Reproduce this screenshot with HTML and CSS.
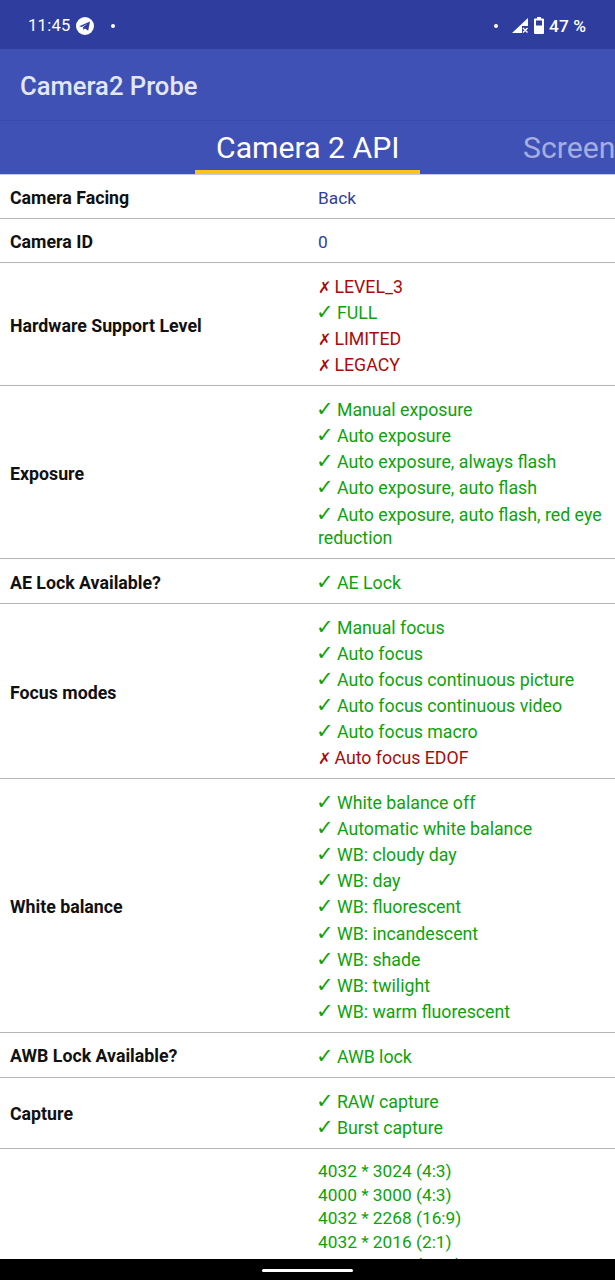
FILE: index.html
```html
<!DOCTYPE html>
<html lang="en">
<head>
    <meta charset="UTF-8">
    <meta name="viewport" content="width=device-width, initial-scale=1.0">
    <title>Camera2 Probe</title>
    <link rel="stylesheet" href="styles.css">
</head>
<body>
    <!-- Status bar -->
    <div class="status-bar">
        <div class="status-left">
            <span class="clock">11:45</span>
            <svg class="tg-icon" width="18" height="18" viewBox="0 0 18 18">
                <circle cx="9" cy="9" r="9" fill="#fff"/>
                <path d="M3.2 9.2 L14 4.6 L12.2 13.8 L8.9 11.4 L7.4 13 L7 10.2 L11.6 6.6 L5.9 10 Z" fill="#2f3e9e"/>
            </svg>
            <span class="dot dot-left"></span>
        </div>
        <div class="status-right">
            <span class="dot dot-right"></span>
            <svg class="signal-icon" width="16" height="15" viewBox="0 0 16 15">
                <path d="M0 15 L16 0 V8 H10 V15 Z" fill="#fff"/>
                <path d="M11 10 L15.5 14.5 M15.5 10 L11 14.5" stroke="#fff" stroke-width="1.4"/>
            </svg>
            <svg class="battery-icon" width="10" height="17" viewBox="0 0 10 17">
                <path d="M3 0 H7 V1.5 H9 A1 1 0 0 1 10 2.5 V16 A1 1 0 0 1 9 17 H1 A1 1 0 0 1 0 16 V2.5 A1 1 0 0 1 1 1.5 H3 Z" fill="#fff"/>
                <rect x="2" y="3.5" width="6" height="5" fill="#2f3e9e"/>
            </svg>
            <span class="battery-text">47 %</span>
        </div>
    </div>

    <!-- App bar -->
    <header class="app-bar">Camera2 Probe</header>

    <!-- Tabs -->
    <nav class="tabs">
        <div class="tab tab-active">Camera 2 API</div>
        <div class="tab">Screen</div>
    </nav>

    <!-- Feature table -->
    <main class="table-wrap">
        <div class="row">
            <div class="label">Camera Facing</div>
            <div class="value info"><div class="line">Back</div></div>
        </div>
        <div class="row">
            <div class="label">Camera ID</div>
            <div class="value info"><div class="line">0</div></div>
        </div>
        <div class="row">
            <div class="label">Hardware Support Level</div>
            <div class="value">
                <div class="item no"><span class="mark">✗</span> LEVEL_3</div>
                <div class="item yes"><span class="mark">✓</span> FULL</div>
                <div class="item no"><span class="mark">✗</span> LIMITED</div>
                <div class="item no"><span class="mark">✗</span> LEGACY</div>
            </div>
        </div>
        <div class="row">
            <div class="label">Exposure</div>
            <div class="value">
                <div class="item yes"><span class="mark">✓</span> Manual exposure</div>
                <div class="item yes"><span class="mark">✓</span> Auto exposure</div>
                <div class="item yes"><span class="mark">✓</span> Auto exposure, always flash</div>
                <div class="item yes"><span class="mark">✓</span> Auto exposure, auto flash</div>
                <div class="item yes"><span class="mark">✓</span> Auto exposure, auto flash, red eye reduction</div>
            </div>
        </div>
        <div class="row">
            <div class="label">AE Lock Available?</div>
            <div class="value">
                <div class="item yes"><span class="mark">✓</span> AE Lock</div>
            </div>
        </div>
        <div class="row">
            <div class="label">Focus modes</div>
            <div class="value">
                <div class="item yes"><span class="mark">✓</span> Manual focus</div>
                <div class="item yes"><span class="mark">✓</span> Auto focus</div>
                <div class="item yes"><span class="mark">✓</span> Auto focus continuous picture</div>
                <div class="item yes"><span class="mark">✓</span> Auto focus continuous video</div>
                <div class="item yes"><span class="mark">✓</span> Auto focus macro</div>
                <div class="item no"><span class="mark">✗</span> Auto focus EDOF</div>
            </div>
        </div>
        <div class="row">
            <div class="label">White balance</div>
            <div class="value">
                <div class="item yes"><span class="mark">✓</span> White balance off</div>
                <div class="item yes"><span class="mark">✓</span> Automatic white balance</div>
                <div class="item yes"><span class="mark">✓</span> WB: cloudy day</div>
                <div class="item yes"><span class="mark">✓</span> WB: day</div>
                <div class="item yes"><span class="mark">✓</span> WB: fluorescent</div>
                <div class="item yes"><span class="mark">✓</span> WB: incandescent</div>
                <div class="item yes"><span class="mark">✓</span> WB: shade</div>
                <div class="item yes"><span class="mark">✓</span> WB: twilight</div>
                <div class="item yes"><span class="mark">✓</span> WB: warm fluorescent</div>
            </div>
        </div>
        <div class="row">
            <div class="label">AWB Lock Available?</div>
            <div class="value">
                <div class="item yes"><span class="mark">✓</span> AWB lock</div>
            </div>
        </div>
        <div class="row">
            <div class="label">Capture</div>
            <div class="value">
                <div class="item yes"><span class="mark">✓</span> RAW capture</div>
                <div class="item yes"><span class="mark">✓</span> Burst capture</div>
            </div>
        </div>
        <div class="row">
            <div class="label"></div>
            <div class="value plain yes">
                <div class="line">4032 * 3024 (4:3)</div>
                <div class="line">4000 * 3000 (4:3)</div>
                <div class="line">4032 * 2268 (16:9)</div>
                <div class="line">4032 * 2016 (2:1)</div>
                <div class="line">3840 * 2160 (16:9)</div>
            </div>
        </div>
    </main>

    <!-- Navigation bar -->
    <footer class="nav-bar"><span class="nav-handle"></span></footer>
</body>
</html>
```

FILE: styles.css
```css
body {
    font-family: Roboto, sans-serif;
    margin: 0;
    padding: 0;
    display: flex;
    flex-direction: column;
    height: 1280px;
    overflow: hidden;
    background: #fff;
}
.status-bar {
    height: 49px;
    flex: none;
    background: #2f3e9e;
    color: #fff;
    display: flex;
    justify-content: space-between;
    align-items: center;
    padding: 2px 29px 0 28px;
    box-sizing: border-box;
}
.status-left, .status-right {
    display: flex;
    align-items: center;
}
.clock {
    font-size: 16.5px;
    letter-spacing: 0.3px;
}
.tg-icon {
    margin-left: 5px;
}
.dot {
    width: 4px;
    height: 4px;
    background: #fff;
    border-radius: 50%;
}
.dot-left {
    margin-left: 17px;
}
.dot-right {
    margin-right: 14px;
}
.battery-icon {
    margin-left: 6px;
}
.battery-text {
    font-size: 17.4px;
    font-weight: 500;
    margin-left: 5px;
}
.app-bar {
    height: 71px;
    flex: none;
    background: #3f51b5;
    color: #e3e6f7;
    font-size: 25.6px;
    font-weight: 500;
    line-height: 75px;
    padding-left: 20px;
    box-sizing: border-box;
}
.tabs {
    height: 55px;
    flex: none;
    background: #3f51b5;
    border-top: 1px solid #3a4aac;
    border-bottom: 1px solid #c5cae9;
    box-sizing: border-box;
    display: flex;
    padding-left: 195px;
    overflow: hidden;
    white-space: nowrap;
}
.tab {
    flex: none;
    font-size: 30.2px;
    color: #a5aee0;
    padding-top: 9px;
    height: 53px;
    box-sizing: border-box;
}
.tab-active {
    color: #fff;
    width: 225px;
    border-bottom: 4px solid #fcc419;
    margin-right: 103px;
    padding-left: 21px;
}
.table-wrap {
    flex: 1;
    min-height: 0;
    overflow: hidden;
}
.row {
    display: flex;
    align-items: center;
    min-height: 44px;
    padding-left: 10px;
    border-bottom: 1px solid #b4b4b4;
    box-sizing: border-box;
}
.label {
    width: 308px;
    flex: none;
    padding-top: 3px;
    font-size: 17.75px;
    font-weight: 700;
    color: #111;
}
.value {
    flex: 1;
    padding: 10.2px 8px 7.6px 0;
    font-size: 17.75px;
    line-height: 23.5px;
}
.info, .plain {
    font-size: 17.3px;
}
.info {
    color: #303f9f;
    padding-top: 12px;
}
.plain {
    padding-top: 11.5px;
}
.item {
    padding-top: 2.6px;
}
.yes {
    color: #0ca30c;
}
.no {
    color: #a80b0b;
}
.mark {
    font-family: "DejaVu Sans", sans-serif;
    font-size: 21px;
    line-height: 0;
    font-weight: 700;
    display: inline-block;
    width: 15px;
    margin-left: -2px;
    margin-right: 1.5px;
}
.no .mark {
    font-size: 16px;
    width: 11px;
    margin-left: 0;
    margin-right: 1px;
}
.nav-bar {
    height: 21px;
    flex: none;
    background: #000;
    display: flex;
    justify-content: center;
    align-items: flex-start;
}
.nav-handle {
    width: 91px;
    height: 3px;
    margin-top: 10px;
    background: #fff;
    border-radius: 2px;
}
```
